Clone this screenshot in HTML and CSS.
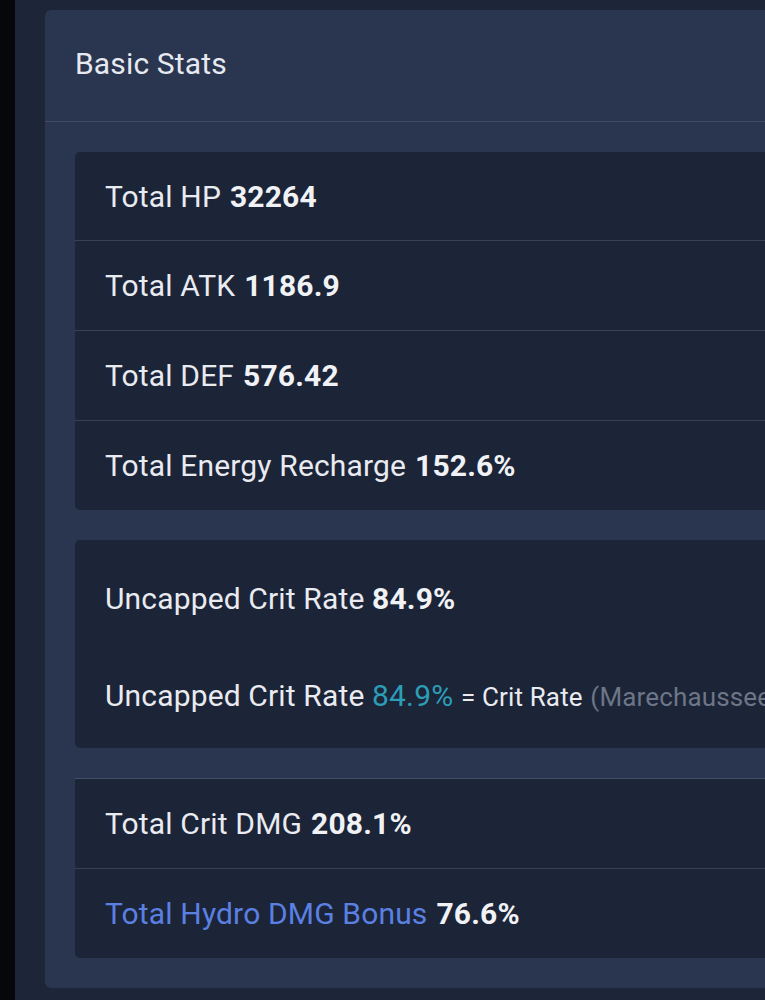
FILE: index.html
```html
<!DOCTYPE html>
<html>
<head>
<meta charset="utf-8">
<link rel="stylesheet" href="styles.css">
</head>
<body>
<div class="page">
  <div class="card">
    <div class="card-header">Basic Stats</div>
    <div class="card-body">
      <div class="group">
        <div class="row">Total HP <b>32264</b></div>
        <div class="row">Total ATK <b>1186.9</b></div>
        <div class="row">Total DEF <b>576.42</b></div>
        <div class="row">Total Energy Recharge <b>152.6%</b></div>
      </div>
      <div class="group crit">
        <div class="line">Uncapped Crit Rate <b>84.9%</b></div>
        <div class="line">Uncapped Crit Rate <span class="teal">84.9%</span> <span class="small">= Crit Rate</span> <span class="small muted">(Marechaussee Hunter 4pc: 36%)</span></div>
      </div>
      <div class="group last">
        <div class="row">Total Crit DMG <b>208.1%</b></div>
        <div class="row"><span class="hydro">Total Hydro DMG Bonus</span> <b>76.6%</b></div>
      </div>
    </div>
  </div>
</div>
</body>
</html>
```
FILE: styles.css
```css
html, body {
  margin: 0;
  padding: 0;
  overflow: hidden;
  background: #05070b;
  height: 1000px;
}
body {
  font-family: Roboto, "Noto Sans", sans-serif;
  color: #e9ebf0;
}
.page {
  margin-left: 15px;
  background: #1d2538;
  height: 1000px;
  padding: 10px 0 0 30px;
  box-sizing: border-box;
}
.card {
  width: 900px;
  background: #2a3550;
  border-radius: 6px;
}
.card-header {
  height: 112px;
  box-sizing: border-box;
  display: flex;
  align-items: center;
  padding-left: 30px;
  padding-bottom: 4px;
  font-size: 30px;
  letter-spacing: 0.15px;
  color: #e6e9ef;
  border-bottom: 1px solid #414c64;
}
.card-body {
  padding: 30px 0 30px 30px;
  display: flex;
  flex-direction: column;
  gap: 30px;
}
.group {
  background: #1c2438;
  border-radius: 5px;
  white-space: nowrap;
}
.row {
  height: 89px;
  display: flex;
  align-items: center;
  gap: 9px;
  padding-left: 30px;
  font-size: 30px;
  letter-spacing: 0.15px;
  border-top: 1px solid #374259;
}
.row:first-child {
  border-top: none;
  height: 88px;
}
.row b, .line b {
  font-weight: 700;
  color: #f0f2f5;
}
.group.last {
  border-top: 1px solid #445069;
  border-radius: 0 0 5px 5px;
}
.group.last .row:first-child {
  height: 89px;
}
.crit {
  height: 208px;
  box-sizing: border-box;
  padding: 39px 0 0 30px;
  display: flex;
  flex-direction: column;
  gap: 57px;
}
.line {
  font-size: 30px;
  letter-spacing: 0.15px;
  line-height: 40px;
}
.teal {
  color: #2c9db6;
}
.small {
  font-size: 26px;
}
.muted {
  color: #6d7686;
}
.hydro {
  color: #5a80e2;
}
```
